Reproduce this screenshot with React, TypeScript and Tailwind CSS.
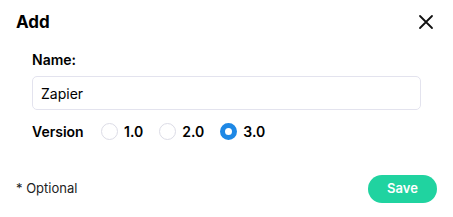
import React, { useState } from 'react';

const versions = ['1.0', '2.0', '3.0'];

export default function App() {
  const [name, setName] = useState('Zapier');
  const [version, setVersion] = useState('3.0');

  return (
    <div className="w-[453px] h-[217px] bg-white font-['Inter',sans-serif] text-black relative">
      <div className="flex items-center justify-between pl-4 pr-4 pt-[11px]">
        <h2 className="text-[17px] font-bold leading-[22px]">Add</h2>
        <button className="w-[22px] h-[22px] flex items-center justify-center">
          <svg width="16" height="16" viewBox="0 0 16 16" fill="none" stroke="#111" strokeWidth="1.8" strokeLinecap="round">
            <path d="M2 2L14 14M14 2L2 14" />
          </svg>
        </button>
      </div>

      <div className="pl-8 pr-8 pt-[17px]">
        <label className="block text-[14px] font-semibold leading-[20px]">Name:</label>
        <input
          value={name}
          onChange={e => setName(e.target.value)}
          className="mt-[6px] w-[389px] h-[34px] border border-[#e3e3ee] rounded-[5px] px-2 text-[14px] outline-none"
        />
        <div className="flex items-center mt-[10px] h-[22px]">
          <span className="text-[14px] font-semibold w-[69px]">Version</span>
          <div className="flex items-center gap-[16px]">
            {versions.map(v => (
              <label key={v} className="flex items-center gap-[6px] cursor-pointer" onClick={() => setVersion(v)}>
                {version === v ? (
                  <span className="w-[17px] h-[17px] rounded-full border-[5px] border-[#1e88e5] bg-white" />
                ) : (
                  <span className="w-[17px] h-[17px] rounded-full border border-[#dcdce6] bg-white" />
                )}
                <span className="text-[14px] font-semibold">{v}</span>
              </label>
            ))}
          </div>
        </div>
      </div>

      <div className="flex items-center justify-between pl-4 pr-4 mt-[33px]">
        <span className="text-[13px] text-[#222]">* Optional</span>
        <button className="w-[69px] h-[28px] rounded-full bg-[#20d3a0] text-white text-[13px] font-semibold">Save</button>
      </div>
    </div>
  );
}
